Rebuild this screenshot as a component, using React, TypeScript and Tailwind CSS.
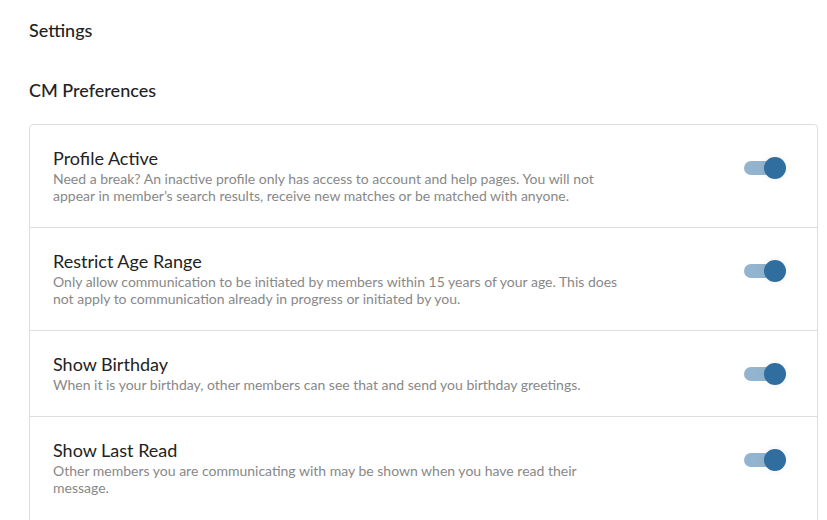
import React from "react";

const items = [
  {
    title: "Profile Active",
    desc: "Need a break? An inactive profile only has access to account and help pages. You will not appear in member’s search results, receive new matches or be matched with anyone.",
  },
  {
    title: "Restrict Age Range",
    desc: "Only allow communication to be initiated by members within 15 years of your age. This does not apply to communication already in progress or initiated by you.",
  },
  {
    title: "Show Birthday",
    desc: "When it is your birthday, other members can see that and send you birthday greetings.",
  },
  {
    title: "Show Last Read",
    desc: "Other members you are communicating with may be shown when you have read their message.",
  },
];

function Toggle() {
  return (
    <div className="relative w-[42px] h-[22px] mt-[10px] flex items-center shrink-0">
      <div className="w-[36px] h-[14px] rounded-full bg-[#93b4cf]" />
      <div className="absolute right-0 top-0 w-[22px] h-[22px] rounded-full bg-[#2f6e9e] shadow-[0_0_6px_2px_rgba(0,0,0,0.04)]" />
    </div>
  );
}

export default function App() {
  return (
    <div
      className="bg-white w-[827px] h-[520px] overflow-hidden text-[#222]"
      style={{ fontFamily: "Lato, 'Noto Sans', sans-serif" }}
    >
      <div className="pl-[29px] pr-[9px]">
        <h1 className="text-[18px] leading-[24px] pt-[18px] font-medium">Settings</h1>
        <h2 className="text-[18px] leading-[24px] mt-[36px] font-medium">CM Preferences</h2>
        <div className="mt-[22px] border border-[#dedede] rounded-[4px] pb-[12px]">
          {items.map((it, i) => (
            <div
              key={i}
              className={`flex items-start justify-between pl-[23px] pr-[31px] pt-[22px] pb-[23px] ${i > 0 ? "border-t border-[#dedede]" : ""}`}
            >
              <div className="w-[565px]">
                <div className="text-[18px] leading-[22px] text-[#222]">{it.title}</div>
                <div className="text-[14px] leading-[17px] text-[#888] mt-[1px]">{it.desc}</div>
              </div>
              <Toggle />
            </div>
          ))}
        </div>
      </div>
    </div>
  );
}
